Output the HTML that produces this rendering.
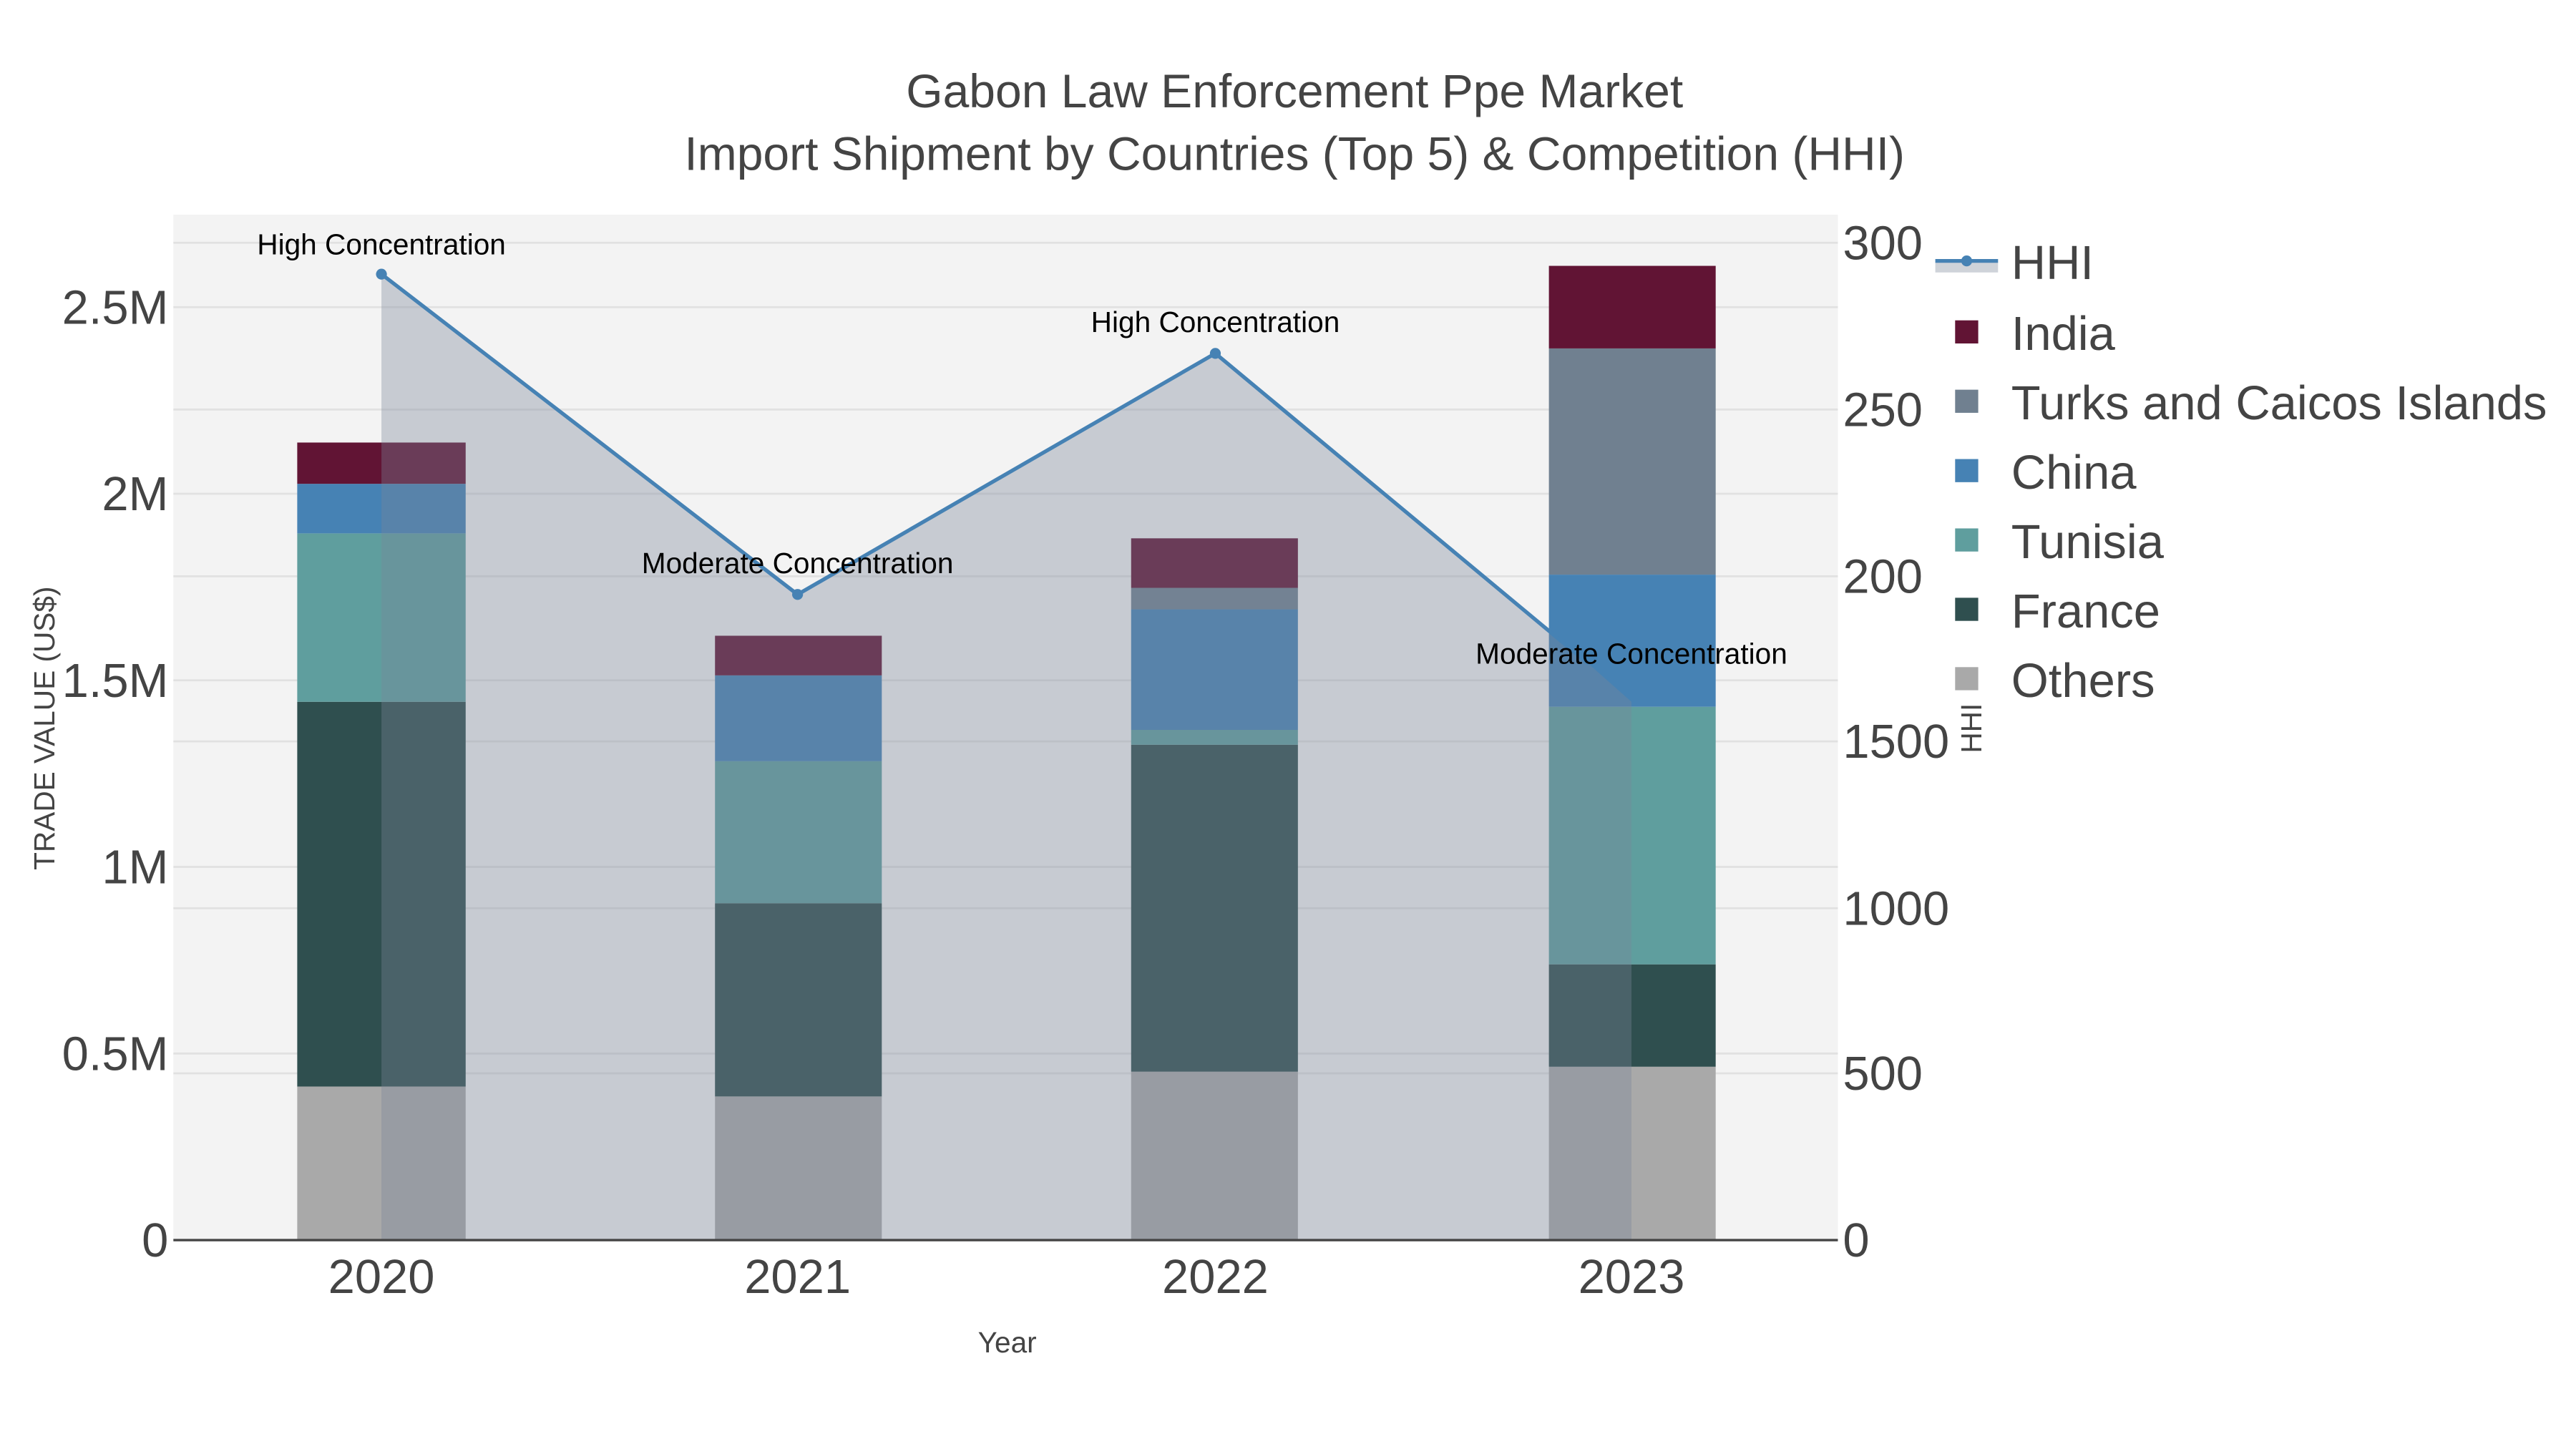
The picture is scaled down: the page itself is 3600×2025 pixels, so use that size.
<!DOCTYPE html>
<html><head><meta charset="utf-8"><style>html,body{margin:0;padding:0;background:#fff;}svg{display:block}</style></head>
<body>
<svg width="3600" height="2025" viewBox="0 0 1560 877.5" xmlns="http://www.w3.org/2000/svg" font-family="'Liberation Sans', sans-serif">
<rect x="0" y="0" width="1560" height="877.5" fill="#fff"/>
<rect x="105" y="130" width="1008" height="621" fill="#f3f3f3"/>
<g stroke="#e1e1e1" stroke-width="1.2">
<line x1="105" x2="1113" y1="186" y2="186"/><line x1="105" x2="1113" y1="299" y2="299"/>
<line x1="105" x2="1113" y1="412" y2="412"/><line x1="105" x2="1113" y1="525" y2="525"/>
<line x1="105" x2="1113" y1="638" y2="638"/>
<line x1="105" x2="1113" y1="147" y2="147"/><line x1="105" x2="1113" y1="248" y2="248"/>
<line x1="105" x2="1113" y1="349" y2="349"/><line x1="105" x2="1113" y1="449" y2="449"/>
<line x1="105" x2="1113" y1="550" y2="550"/><line x1="105" x2="1113" y1="650" y2="650"/>
</g>
<g>
<rect x="180" y="658" width="102" height="93" fill="#a9a9a9"/>
<rect x="180" y="425" width="102" height="233" fill="#2f4f4f"/>
<rect x="180" y="323" width="102" height="102" fill="#5f9e9e"/>
<rect x="180" y="293" width="102" height="30" fill="#4682b4"/>
<rect x="180" y="268" width="102" height="25" fill="#611434"/>

<rect x="433" y="664" width="101" height="87" fill="#a9a9a9"/>
<rect x="433" y="547" width="101" height="117" fill="#2f4f4f"/>
<rect x="433" y="461" width="101" height="86" fill="#5f9e9e"/>
<rect x="433" y="409" width="101" height="52" fill="#4682b4"/>
<rect x="433" y="385" width="101" height="24" fill="#611434"/>

<rect x="685" y="649" width="101" height="102" fill="#a9a9a9"/>
<rect x="685" y="451" width="101" height="198" fill="#2f4f4f"/>
<rect x="685" y="442" width="101" height="9" fill="#5f9e9e"/>
<rect x="685" y="369" width="101" height="73" fill="#4682b4"/>
<rect x="685" y="356" width="101" height="13" fill="#708090"/>
<rect x="685" y="326" width="101" height="30" fill="#611434"/>

<rect x="938" y="646" width="101" height="105" fill="#a9a9a9"/>
<rect x="938" y="584" width="101" height="62" fill="#2f4f4f"/>
<rect x="938" y="428" width="101" height="156" fill="#5f9e9e"/>
<rect x="938" y="348" width="101" height="80" fill="#4682b4"/>
<rect x="938" y="211" width="101" height="137" fill="#708090"/>
<rect x="938" y="161" width="101" height="50" fill="#611434"/>
</g>
<polygon points="231,751 231,166 483,360 736,214 962,402 988,425 988,751" fill="rgb(122,134,153)" fill-opacity="0.36"/>
<polyline points="231,166 483,360 736,214 962,402" fill="none" stroke="#4682b4" stroke-width="2.3"/>
<circle cx="231" cy="166" r="3.3" fill="#4682b4"/>
<circle cx="483" cy="360" r="3.3" fill="#4682b4"/>
<circle cx="736" cy="214" r="3.3" fill="#4682b4"/>
<line x1="105" x2="1113" y1="751" y2="751" stroke="#444" stroke-width="1.5"/>
<g font-size="17.6" fill="#000" text-anchor="middle">
<text x="231" y="154">High Concentration</text>
<text x="483" y="347">Moderate Concentration</text>
<text x="736" y="201">High Concentration</text>
<text x="988" y="402">Moderate Concentration</text>
</g>
<g font-size="28.6" fill="#444" text-anchor="middle">
<text x="784" y="65">Gabon Law Enforcement Ppe Market</text>
<text x="784" y="103">Import Shipment by Countries (Top 5) &amp; Competition (HHI)</text>
</g>
<g font-size="29" fill="#444" text-anchor="end">
<text x="102" y="761">0</text><text x="102" y="648">0.5M</text><text x="102" y="535">1M</text>
<text x="102" y="422">1.5M</text><text x="102" y="309">2M</text><text x="102" y="196">2.5M</text>
</g>
<text x="33" y="441" font-size="17.6" fill="#444" text-anchor="middle" transform="rotate(-90 33 441)">TRADE VALUE (US$)</text>
<g font-size="29" fill="#444">
<text x="1116" y="761">0</text><text x="1116" y="660">500</text><text x="1116" y="560">1000</text>
<text x="1116" y="459">1500</text><text x="1116" y="359">200</text><text x="1116" y="258">250</text>
<text x="1116" y="157">300</text>
</g>
<text x="1200" y="441" font-size="17.6" fill="#444" text-anchor="middle" transform="rotate(-90 1200 441)">HHI</text>
<g font-size="29" fill="#444" text-anchor="middle">
<text x="231" y="783">2020</text><text x="483" y="783">2021</text><text x="736" y="783">2022</text><text x="988" y="783">2023</text>
</g>
<text x="610" y="819" font-size="17.6" fill="#444" text-anchor="middle">Year</text>
<rect x="1172" y="159" width="38" height="6" fill="#cfd3d9"/>
<line x1="1172" x2="1210" y1="158" y2="158" stroke="#4682b4" stroke-width="2.3"/>
<circle cx="1191" cy="158" r="3.3" fill="#4682b4"/>
<g font-size="29" fill="#444">
<text x="1218" y="169">HHI</text>
<text x="1218" y="212">India</text>
<text x="1218" y="254">Turks and Caicos Islands</text>
<text x="1218" y="296">China</text>
<text x="1218" y="338">Tunisia</text>
<text x="1218" y="380">France</text>
<text x="1218" y="422">Others</text>
</g>
<rect x="1184" y="194" width="14" height="14" fill="#611434"/>
<rect x="1184" y="236" width="14" height="14" fill="#708090"/>
<rect x="1184" y="278" width="14" height="14" fill="#4682b4"/>
<rect x="1184" y="320" width="14" height="14" fill="#5f9e9e"/>
<rect x="1184" y="362" width="14" height="14" fill="#2f4f4f"/>
<rect x="1184" y="404" width="14" height="14" fill="#a9a9a9"/>
</svg>
</body></html>
